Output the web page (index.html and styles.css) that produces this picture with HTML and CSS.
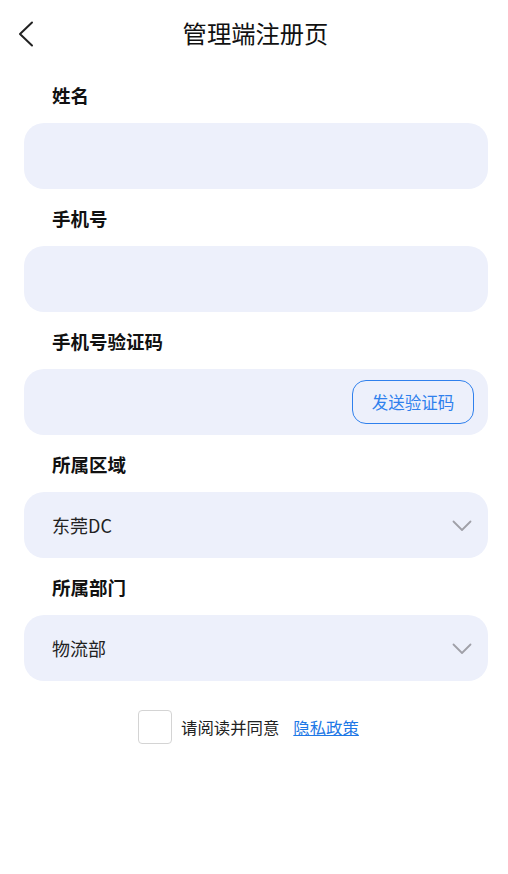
FILE: index.html
```html
<!DOCTYPE html>
<html lang="zh">
<head>
<meta charset="utf-8">
<link rel="stylesheet" href="styles.css">
</head>
<body>
<div class="page">
  <header class="header">
    <button class="back" aria-label="返回">
      <svg width="18" height="26" viewBox="0 0 18 26"><path d="M15 1.5 L3 13 L15 24.5" fill="none" stroke="#222" stroke-width="2" stroke-linecap="round" stroke-linejoin="round"/></svg>
    </button>
    <h1 class="title">管理端注册页</h1>
  </header>
  <form class="form">
    <div class="field">
      <div class="label">姓名</div>
      <div class="input"></div>
    </div>
    <div class="field">
      <div class="label">手机号</div>
      <div class="input"></div>
    </div>
    <div class="field">
      <div class="label">手机号验证码</div>
      <div class="input">
        <span class="value"></span>
        <span class="send">发送验证码</span>
      </div>
    </div>
    <div class="field">
      <div class="label">所属区域</div>
      <div class="input">
        <span class="value">东莞DC</span>
        <svg class="chev" width="20" height="12" viewBox="0 0 20 12"><path d="M1.5 1.5 L10 10 L18.5 1.5" fill="none" stroke="#a0a0a8" stroke-width="1.8" stroke-linecap="round" stroke-linejoin="round"/></svg>
      </div>
    </div>
    <div class="field">
      <div class="label">所属部门</div>
      <div class="input">
        <span class="value">物流部</span>
        <svg class="chev" width="20" height="12" viewBox="0 0 20 12"><path d="M1.5 1.5 L10 10 L18.5 1.5" fill="none" stroke="#a0a0a8" stroke-width="1.8" stroke-linecap="round" stroke-linejoin="round"/></svg>
      </div>
    </div>
    <div class="agree">
      <span class="box"></span>
      <span class="agree-text">请阅读并同意</span>
      <a class="link">隐私政策</a>
    </div>
  </form>
</div>
</body>
</html>
```

FILE: styles.css
```css
* { box-sizing: border-box; }
html, body { margin: 0; padding: 0; background: #fff; }
body {
  font-family: "Noto Sans CJK SC", "Noto Sans", sans-serif;
  color: #111;
  width: 508px;
}
.header {
  height: 66px;
  display: flex;
  align-items: center;
  justify-content: center;
  position: relative;
  padding-left: 3px;
}
.back {
  position: absolute;
  left: 17px;
  top: 21px;
  border: 0;
  background: none;
  padding: 0;
  width: 18px;
  height: 26px;
  display: flex;
}
.title {
  margin: 0;
  font-size: 24.3px;
  font-weight: 400;
  line-height: 34px;
  color: #111;
}
.form {
  padding: 17px 20px 0 24px;
  display: flex;
  flex-direction: column;
  gap: 17px;
}
.field {
  display: flex;
  flex-direction: column;
  gap: 16px;
}
.label {
  padding-left: 28px;
  font-size: 18.5px;
  font-weight: 700;
  line-height: 24px;
  color: #111;
}
.input {
  height: 66px;
  width: 464px;
  border-radius: 20px;
  background: #edf0fb;
  display: flex;
  align-items: center;
  justify-content: space-between;
  padding: 0 16px 0 28px;
}
.value {
  font-size: 18px;
  color: #222;
  line-height: 24px;
}
.send {
  height: 44px;
  width: 122px;
  border: 1.5px solid #2f80ed;
  border-radius: 14px;
  color: #2f80ed;
  font-size: 16.5px;
  display: flex;
  align-items: center;
  justify-content: center;
  margin-right: -2px;
}
.chev { margin-top: 2px; }
.agree {
  margin-top: 12px;
  display: flex;
  align-items: center;
  padding-left: 114px;
}
.box {
  width: 34px;
  height: 34px;
  border: 1.5px solid #d4d4d4;
  border-radius: 4px;
  background: #fff;
}
.agree-text {
  margin-left: 9px;
  font-size: 16.4px;
  color: #222;
}
.link {
  margin-left: 14px;
  font-size: 16.4px;
  color: #1e78e6;
  text-decoration: underline;
}
```
